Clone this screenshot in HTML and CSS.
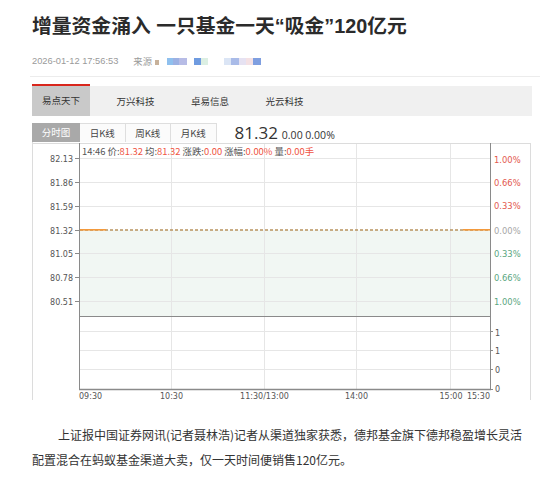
FILE: index.html
```html
<!DOCTYPE html>
<html lang="zh-CN">
<head>
<meta charset="utf-8">
<title>增量资金涌入 一只基金一天“吸金”120亿元</title>
<link rel="stylesheet" href="styles.css">
</head>
<body>
<div class="page">
  <h1 class="title">增量资金涌入 一只基金一天“吸金”120亿元</h1>
  <div class="meta">
    <span class="time">2026-01-12 17:56:53</span>
    <span class="source">来源</span>
    <span class="blur">
      <i class="b1"></i><i class="b2"></i><i class="b3"></i><i class="b4"></i>
      <i class="gap"></i>
      <i class="b5"></i><i class="b6"></i>
      <i class="gap2"></i>
      <i class="b7"></i><i class="b8"></i><i class="b9"></i><i class="b10"></i><i class="b11"></i>
    </span>
  </div>
  <div class="divider"></div>

  <div class="tabs">
    <div class="tab active">易点天下</div>
    <div class="tab">万兴科技</div>
    <div class="tab">卓易信息</div>
    <div class="tab">光云科技</div>
  </div>

  <div class="chart-head">
    <div class="ktabs">
      <div class="ktab on">分时图</div>
      <div class="ktab">日K线</div>
      <div class="ktab">周K线</div>
      <div class="ktab">月K线</div>
    </div>
    <div class="quote">
      <span class="price">81.32</span>
      <span class="chg">0.00 0.00%</span>
    </div>
  </div>

  <svg class="chart" width="500" height="258" viewBox="32 142 500 258" xmlns="http://www.w3.org/2000/svg">
    <!-- outer frame -->
    <line x1="32.5" y1="142" x2="32.5" y2="400" stroke="#dcdcdc"/>
    <line x1="530.5" y1="143" x2="530.5" y2="400" stroke="#dcdcdc"/>
    <line x1="32" y1="143.5" x2="531" y2="143.5" stroke="#dcdcdc"/>
    <!-- fill under price -->
    <rect x="80" y="230" width="410" height="86.5" fill="#f1f7f3"/>
    <!-- horizontal grid -->
    <g stroke="#e6e6e6">
      <line x1="80" y1="158.5" x2="490" y2="158.5"/>
      <line x1="80" y1="182.5" x2="490" y2="182.5"/>
      <line x1="80" y1="206.5" x2="490" y2="206.5"/>
      <line x1="80" y1="253.5" x2="490" y2="253.5"/>
      <line x1="80" y1="277.5" x2="490" y2="277.5"/>
      <line x1="80" y1="301.5" x2="490" y2="301.5"/>
      <line x1="80" y1="331.5" x2="490" y2="331.5"/>
      <line x1="80" y1="350.5" x2="490" y2="350.5"/>
      <line x1="80" y1="369.5" x2="490" y2="369.5"/>
      <!-- vertical grid -->
      <line x1="171.5" y1="144" x2="171.5" y2="389"/>
      <line x1="264.5" y1="144" x2="264.5" y2="389"/>
      <line x1="356.5" y1="144" x2="356.5" y2="389"/>
      <line x1="450.5" y1="144" x2="450.5" y2="389"/>
    </g>
    <!-- price line -->
    <line x1="80" y1="230" x2="490" y2="230" stroke="#b8925e" stroke-width="1.3" stroke-dasharray="3 2"/>
    <line x1="80" y1="229.8" x2="106" y2="229.8" stroke="#f39a3d" stroke-width="1.6"/>
    <line x1="463" y1="229.8" x2="490" y2="229.8" stroke="#f39a3d" stroke-width="1.6"/>
    <!-- axes -->
    <g stroke="#8a8a8a">
      <line x1="79.5" y1="143" x2="79.5" y2="390"/>
      <line x1="490.5" y1="143" x2="490.5" y2="390"/>
      <line x1="79" y1="316.5" x2="491" y2="316.5"/>
      <line x1="79" y1="389.5" x2="491" y2="389.5" stroke-width="1.4"/>
      <!-- ticks -->
      <line x1="75" y1="158.5" x2="79" y2="158.5"/>
      <line x1="75" y1="182.5" x2="79" y2="182.5"/>
      <line x1="75" y1="206.5" x2="79" y2="206.5"/>
      <line x1="75" y1="230.5" x2="79" y2="230.5"/>
      <line x1="75" y1="253.5" x2="79" y2="253.5"/>
      <line x1="75" y1="277.5" x2="79" y2="277.5"/>
      <line x1="75" y1="301.5" x2="79" y2="301.5"/>
      <line x1="490" y1="331.5" x2="493" y2="331.5"/>
      <line x1="490" y1="350.5" x2="493" y2="350.5"/>
      <line x1="490" y1="369.5" x2="493" y2="369.5"/>
      <line x1="490" y1="389.5" x2="493" y2="389.5"/>
    </g>
    <!-- info line -->
    <text class="info" x="82" y="155"><tspan class="lbl">14:46 价:</tspan><tspan class="val">81.32</tspan><tspan class="lbl"> 均:</tspan><tspan class="val">81.32</tspan><tspan class="lbl"> 涨跌:</tspan><tspan class="val">0.00</tspan><tspan class="lbl"> 涨幅:</tspan><tspan class="val">0.00%</tspan><tspan class="lbl"> 量:</tspan><tspan class="val">0.00手</tspan></text>
    <!-- left labels -->
    <g class="ylab" text-anchor="end">
      <text x="73" y="162">82.13</text>
      <text x="73" y="185.5">81.86</text>
      <text x="73" y="209.5">81.59</text>
      <text x="73" y="233.5">81.32</text>
      <text x="73" y="257">81.05</text>
      <text x="73" y="281">80.78</text>
      <text x="73" y="305">80.51</text>
    </g>
    <!-- right labels -->
    <g class="plab">
      <text class="up" x="494" y="162.5">1.00%</text>
      <text class="up" x="494" y="185.5">0.66%</text>
      <text class="up" x="494" y="209">0.33%</text>
      <text class="flat" x="494" y="233.5">0.00%</text>
      <text class="down" x="494" y="256.5">0.33%</text>
      <text class="down" x="494" y="280.5">0.66%</text>
      <text class="down" x="494" y="305">1.00%</text>
    </g>
    <g class="vlab">
      <text x="495" y="335.5">1</text>
      <text x="495" y="354">1</text>
      <text x="495" y="373">0</text>
      <text x="495" y="392">0</text>
    </g>
    <!-- time labels -->
    <g class="tlab">
      <text x="79" y="399">09:30</text>
      <text x="171.5" y="399" text-anchor="middle">10:30</text>
      <text x="264.5" y="399" text-anchor="middle">11:30/13:00</text>
      <text x="356.5" y="399" text-anchor="middle">14:00</text>
      <text x="451" y="399" text-anchor="middle">15:00</text>
      <text x="490" y="399" text-anchor="end">15:30</text>
    </g>
  </svg>

  <p class="article">上证报中国证券网讯(记者聂林浩)记者从渠道独家获悉，德邦基金旗下德邦稳盈增长灵活配置混合在蚂蚁基金渠道大卖，仅一天时间便销售120亿元。</p>
</div>
</body>
</html>
```

FILE: styles.css
```css
html, body {
  margin: 0;
  padding: 0;
  background: #ffffff;
}

body {
  font-family: "Noto Sans CJK SC", "Liberation Sans", sans-serif;
  color: #333333;
}

.page {
  padding-left: 32px;
  width: 510px;
}

.title {
  margin: 0;
  padding-top: 12px;
  font-family: "Liberation Sans", "Noto Sans CJK SC", sans-serif;
  font-size: 19.8px;
  line-height: 28px;
  font-weight: bold;
  color: #2b2b2b;
  white-space: nowrap;
}

.meta {
  display: flex;
  align-items: center;
  height: 14px;
  margin-top: 14px;
  font-size: 9.3px;
  color: #9a9a9a;
}

.meta .time {
  font-family: "Liberation Sans", sans-serif;
}

.meta .source {
  margin-left: 15px;
}

.blur {
  display: flex;
  align-items: center;
  margin-left: 3px;
}

.blur i {
  display: block;
  width: 6px;
  height: 7px;
}

.blur .b1 { width: 4px; height: 5px; background: #c7b19a; margin-top: 3px; margin-right: 8px; }
.blur .b2 { background: #8fc0ee; }
.blur .b3 { background: #9cb1e3; }
.blur .b4 { background: #b7bce6; width: 8px; }
.blur .gap { width: 7px; }
.blur .b5 { background: #6f9be0; width: 7px; }
.blur .b6 { background: #dcefe3; width: 7px; }
.blur .gap2 { width: 16px; }
.blur .b7 { background: #dbe5f5; width: 7px; }
.blur .b8 { background: #a9bbe8; width: 8px; }
.blur .b9 { background: #e6e2f2; width: 7px; }
.blur .b10 { background: #f4e1e4; width: 7px; }
.blur .b11 { background: #7f9fe0; width: 8px; }

.divider {
  margin-top: 8px;
  margin-left: -2px;
  width: 510px;
  border-top: 1px solid #ececec;
}

.tabs {
  display: flex;
  margin-top: 9px;
  height: 30px;
  width: 500px;
  background: #f0f0f0;
}

.tab {
  width: 58px;
  margin-right: 16.5px;
  box-sizing: border-box;
  text-align: center;
  font-size: 9.5px;
  line-height: 30px;
  color: #333;
}

.tab.active {
  margin-top: -2px;
  height: 32px;
  line-height: 29px;
  border-top: 2px solid #d9261c;
  background: #c9c9c9;
}

.chart-head {
  display: flex;
  align-items: center;
  margin-top: 7px;
  height: 19px;
}

.ktabs {
  display: flex;
  height: 19px;
}

.ktab {
  width: 45.5px;
  height: 19px;
  box-sizing: border-box;
  border: 1px solid #dedede;
  border-left: none;
  border-bottom: none;
  background: #fbfbfb;
  text-align: center;
  font-size: 9.5px;
  line-height: 18px;
  color: #444;
}

.ktab.on {
  width: 48px;
  border: none;
  background: #a9a9a9;
  color: #ffffff;
  line-height: 19px;
}

.quote {
  margin-left: 18px;
  display: flex;
  align-items: baseline;
  color: #333;
}

.price {
  font-family: "Open Sans", sans-serif;
  font-size: 17px;
  line-height: 19px;
}

.chg {
  margin-left: 4px;
  font-family: "Open Sans", sans-serif;
  font-size: 10.5px;
}

.chart {
  display: block;
  margin-top: 0;
}

.chart .info {
  font-family: "Noto Sans CJK SC", sans-serif;
  font-size: 9.4px;
}

.chart .info .lbl { fill: #555555; }
.chart .info .val { fill: #ef5443; }

.chart .ylab text {
  font-family: "DejaVu Sans", sans-serif;
  font-size: 8px;
  fill: #555555;
}

.chart .plab text {
  font-family: "DejaVu Sans", sans-serif;
  font-size: 8.4px;
}

.chart .plab .up { fill: #e3574e; }
.chart .plab .flat { fill: #a6a6a6; }
.chart .plab .down { fill: #5aa67f; }

.chart .vlab text {
  font-family: "DejaVu Sans", sans-serif;
  font-size: 8px;
  fill: #555555;
}

.chart .tlab text {
  font-family: "DejaVu Sans", sans-serif;
  font-size: 8px;
  fill: #555555;
}

.article {
  margin: 22px 0 0 0;
  width: 500px;
  font-size: 12px;
  line-height: 25px;
  text-indent: 26px;
  color: #333333;
}
```
